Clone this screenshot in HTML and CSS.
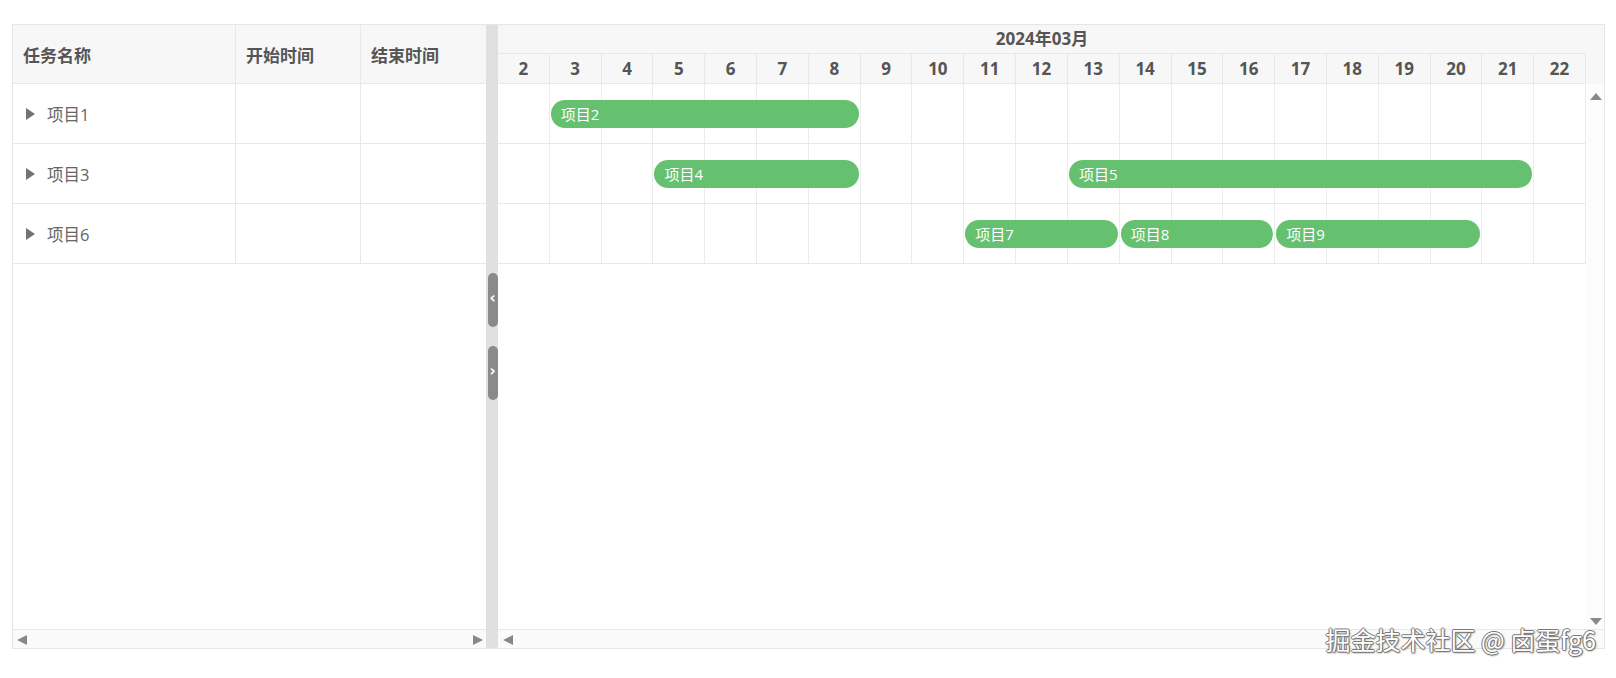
FILE: index.html
```html
<!DOCTYPE html>
<html lang="zh-CN">
<head>
    <meta charset="UTF-8">
    <title>甘特图</title>
    <link rel="stylesheet" href="styles.css">
</head>
<body>

    <div class="gantt">

        <!-- Task table -->
        <div class="table-pane">
            <div class="table-head">
                <div class="th col-name">任务名称</div>
                <div class="th col-start">开始时间</div>
                <div class="th col-end">结束时间</div>
            </div>
            <div class="tr">
                <div class="td col-name"><span class="caret"></span>项目1</div>
                <div class="td col-start"></div>
                <div class="td col-end"></div>
            </div>
            <div class="tr">
                <div class="td col-name"><span class="caret"></span>项目3</div>
                <div class="td col-start"></div>
                <div class="td col-end"></div>
            </div>
            <div class="tr">
                <div class="td col-name"><span class="caret"></span>项目6</div>
                <div class="td col-start"></div>
                <div class="td col-end"></div>
            </div>
            <div class="fill"></div>
            <div class="hscroll">
                <span class="arrow-left"></span>
                <span class="arrow-right"></span>
            </div>
        </div>

        <!-- Splitter -->
        <div class="splitter">
            <div class="split-btn">&lsaquo;</div>
            <div class="split-btn">&rsaquo;</div>
        </div>

        <!-- Chart -->
        <div class="chart-pane">
            <div class="chart-main">
                <div class="chart-area">
                    <div class="month">2024年03月</div>
                    <div class="days">
                        <div>2</div><div>3</div><div>4</div><div>5</div><div>6</div><div>7</div><div>8</div>
                        <div>9</div><div>10</div><div>11</div><div>12</div><div>13</div><div>14</div><div>15</div>
                        <div>16</div><div>17</div><div>18</div><div>19</div><div>20</div><div>21</div><div>22</div>
                    </div>

                    <div class="grow">
                        <div class="cells">
                            <div></div><div></div><div></div><div></div><div></div><div></div><div></div>
                            <div></div><div></div><div></div><div></div><div></div><div></div><div></div>
                            <div></div><div></div><div></div><div></div><div></div><div></div><div></div>
                        </div>
                        <div class="bars">
                            <div class="bar" style="grid-column: 2 / 8">项目2</div>
                        </div>
                    </div>

                    <div class="grow">
                        <div class="cells">
                            <div></div><div></div><div></div><div></div><div></div><div></div><div></div>
                            <div></div><div></div><div></div><div></div><div></div><div></div><div></div>
                            <div></div><div></div><div></div><div></div><div></div><div></div><div></div>
                        </div>
                        <div class="bars">
                            <div class="bar" style="grid-column: 4 / 8">项目4</div>
                            <div class="bar" style="grid-column: 12 / 21">项目5</div>
                        </div>
                    </div>

                    <div class="grow">
                        <div class="cells">
                            <div></div><div></div><div></div><div></div><div></div><div></div><div></div>
                            <div></div><div></div><div></div><div></div><div></div><div></div><div></div>
                            <div></div><div></div><div></div><div></div><div></div><div></div><div></div>
                        </div>
                        <div class="bars">
                            <div class="bar" style="grid-column: 10 / 13">项目7</div>
                            <div class="bar" style="grid-column: 13 / 16">项目8</div>
                            <div class="bar" style="grid-column: 16 / 20">项目9</div>
                        </div>
                    </div>
                </div>

                <div class="vscroll">
                    <div class="vscroll-head"></div>
                    <div class="vscroll-track">
                        <span class="arrow-up"></span>
                        <span class="arrow-down"></span>
                    </div>
                </div>
            </div>
            <div class="hscroll">
                <span class="arrow-left arrow-gap"></span>
            </div>
        </div>

    </div>

    <div class="watermark">掘金技术社区 @ 卤蛋fg6</div>

</body>
</html>
```

FILE: styles.css
```css
* { box-sizing: border-box; }
body { margin: 0; background: #fff; color: #555; font-family: "Open Sans", "Noto Sans CJK SC", sans-serif; }

.gantt { display: flex; width: 1593px; height: 625px; margin: 24px 0 0 12px; border: 1px solid #e6e6e6; }

/* Task table */
.table-pane { width: 473px; display: flex; flex-direction: column; }
.table-head { display: flex; height: 59px; background: #f7f7f7; border-bottom: 1px solid #e8e8e8; }
.tr { display: flex; height: 60px; border-bottom: 1px solid #e8e8e8; }
.col-name { width: 223px; }
.col-start { width: 125px; }
.col-end { width: 125px; border-right: none !important; }
.th { display: flex; align-items: center; padding: 0 10px; font-size: 17px; font-weight: bold; color: #555; border-right: 1px solid #e8e8e8; }
.td { display: flex; align-items: center; padding: 0 13px; font-size: 16.5px; color: #666; border-right: 1px solid #e8e8e8; }
.caret { width: 0; height: 0; margin-right: 12px; border-left: 9px solid #737373; border-top: 6.5px solid transparent; border-bottom: 6.5px solid transparent; }
.fill { flex: 1; }

/* Scrollbars */
.hscroll { height: 19px; display: flex; align-items: center; justify-content: space-between; padding: 1px 3px 0 4px; background: #fafafa; border-top: 1px solid #e8e8e8; }
.arrow-left { width: 0; height: 0; border-right: 10px solid #888; border-top: 5.5px solid transparent; border-bottom: 5.5px solid transparent; }
.arrow-right { width: 0; height: 0; border-left: 10px solid #888; border-top: 5.5px solid transparent; border-bottom: 5.5px solid transparent; }
.arrow-gap { margin-left: 1px; }
.vscroll { flex: 1; display: flex; flex-direction: column; }
.vscroll-head { height: 59px; background: #f7f7f7; }
.vscroll-track { flex: 1; display: flex; flex-direction: column; justify-content: space-between; align-items: center; padding: 9px 0 4px 1px; background: #fcfcfc; }
.arrow-up { width: 0; height: 0; border-bottom: 7px solid #888; border-left: 6.5px solid transparent; border-right: 6.5px solid transparent; }
.arrow-down { width: 0; height: 0; border-top: 7px solid #888; border-left: 6.5px solid transparent; border-right: 6.5px solid transparent; }

/* Splitter */
.splitter { width: 12px; display: flex; flex-direction: column; align-items: center; gap: 19px; padding: 248px 0 0 1px; background: #e0e0e0; }
.split-btn { width: 10px; height: 54px; border-radius: 5px; background: #8a8a8a; color: #fff; font-family: "DejaVu Sans", sans-serif; font-size: 15px; font-weight: bold; line-height: 50px; text-align: center; }

/* Chart */
.chart-pane { flex: 1; display: flex; flex-direction: column; }
.chart-main { flex: 1; display: flex; }
.chart-area { width: 1088px; }
.month { height: 29px; line-height: 28px; text-align: center; font-size: 17px; font-weight: bold; background: #f7f7f7; border-bottom: 1px solid #e8e8e8; }
.days { display: grid; grid-template-columns: repeat(21, 1fr); height: 30px; background: #f7f7f7; border-bottom: 1px solid #e8e8e8; }
.days div { line-height: 29px; text-align: center; font-size: 17px; font-weight: bold; border-right: 1px solid #e8e8e8; }
.grow { display: grid; height: 60px; border-bottom: 1px solid #e8e8e8; }
.grow > div { grid-area: 1 / 1; }
.cells, .bars { display: grid; grid-template-columns: repeat(21, 1fr); }
.cells div { border-right: 1px solid #ececec; }
.bars { align-items: center; }
.bar { grid-row: 1; height: 28px; margin: 0 2px 0 1px; padding-left: 10px; border-radius: 14px; background: #65c16f; color: #fff; font-size: 15px; line-height: 28px; white-space: nowrap; overflow: hidden; }

.watermark { position: absolute; top: 621px; right: 20px; font-family: "Noto Sans CJK SC", sans-serif; font-size: 25px; color: #fff;
    text-shadow: -1px 0 #777, 1px 0 #777, 0 -1px #777, 0 1px #777, 1px 1px 2px #666; }
```
